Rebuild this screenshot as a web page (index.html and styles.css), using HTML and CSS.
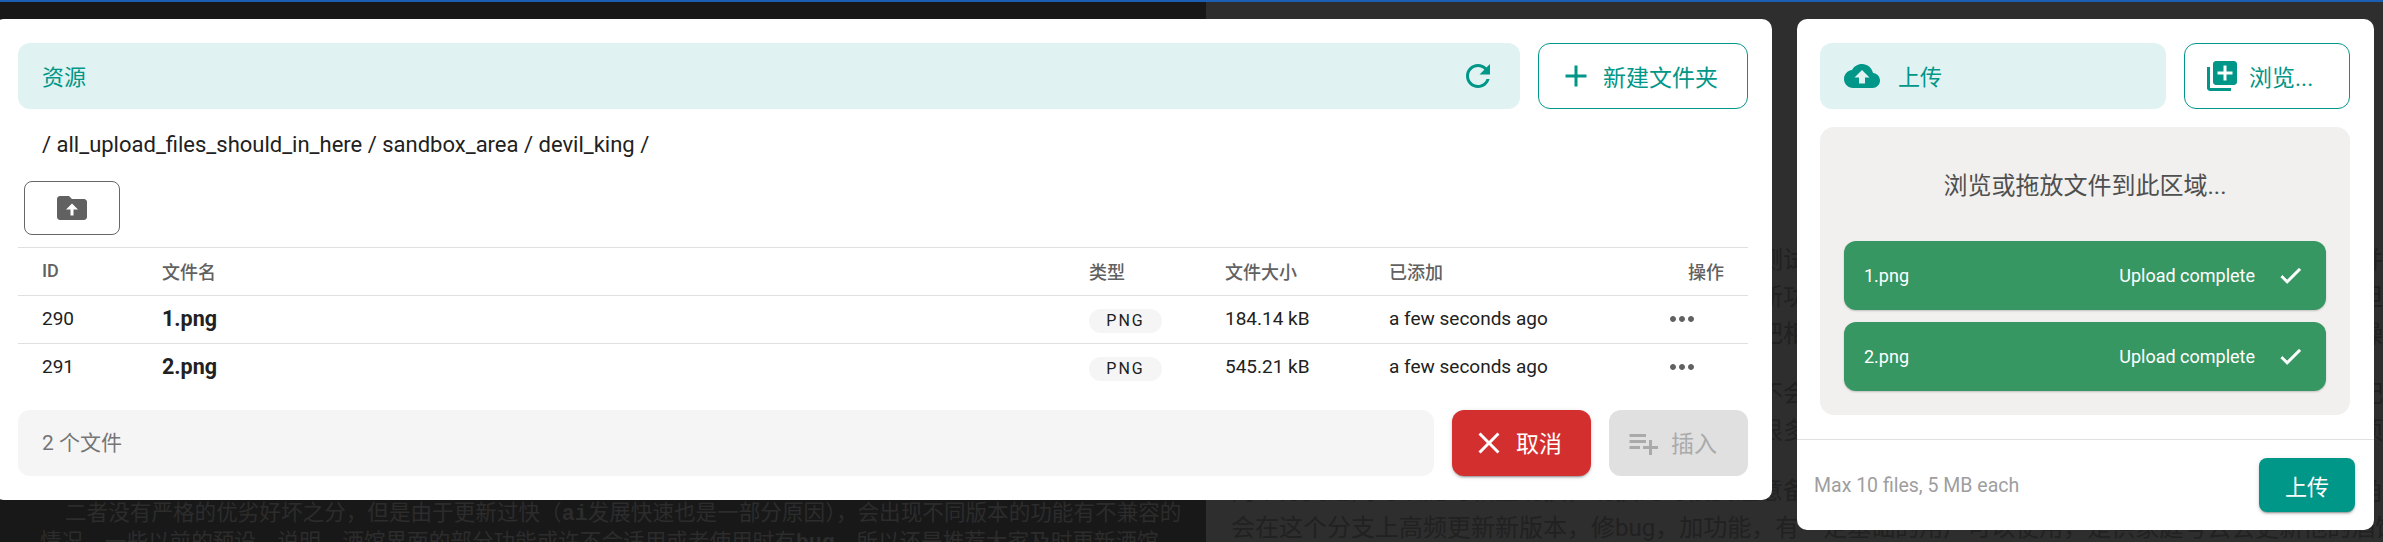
FILE: index.html
```html
<!DOCTYPE html>
<html lang="zh-CN">
<head>
    <meta charset="UTF-8">
    <title>资源</title>
    <link rel="stylesheet" href="styles.css">
</head>
<body>
    <div class="page">
        <div class="page-left">
            <p>二者没有严格的优劣好坏之分，但是由于更新过快（<b>ai</b>发展快速也是一部分原因），会出现不同版本的功能有不兼容的</p>
            <p class="flush">情况，一些以前的预设、说明、酒馆界面的部分功能或许不会适用或者使用时有<b>bug</b>，所以还是推荐大家及时更新酒馆</p>
        </div>
        <div class="page-right">
            <p>酒馆目前有两个分支，一个是稳定版本，另一个是测试分支，天末更新的内容会先在这里发布，然后才会合并到稳定的版本化<br>
            这里的内容都是可以随时修改的，如果你想要尝试新功能可改动设置，只需要切换分支即可完成更新，不用担心丢失数据文件了<br>
            你也可以选择回到之前的版本，或者在配置文件中把相关功能加或者减，然后重新启动一下酒馆就可以了，操作很简单的方法</p>
            <p>如果你是第一次安装的话建议使用稳定分支，这样不会有一个新手难以解决的问题，并且大部分插件也都适配这个版本的匹<br>
            配置，而测试分支则更适合喜欢尝鲜的朋友使用，很多新功能的入口都在这里，可以提前体验到新版本的各项功能和优化的</p>
            <p>两个分支之间可以随时相互切换，切换的时候要注意备份，但是不用担心，只要数据还在就不会影响已有的角色卡和聊天部<br>
            会在这个分支上高频更新新版本，修bug，加功能，有一定基础的用户可以使用，是供家庭号云会更新他的酒馆。</p>
        </div>
    </div>

    <div class="dialogs">
        <section class="dialog dialog-files">
            <div class="head">
                <div class="head-bar">
                    <span class="head-title">资源</span>
                    <svg class="icon refresh" viewBox="0 0 24 24"><path d="M17.65 6.35C16.2 4.9 14.21 4 12 4c-4.42 0-7.99 3.58-7.99 8s3.57 8 7.99 8c3.73 0 6.84-2.55 7.73-6h-2.08c-.82 2.33-3.04 4-5.65 4-3.31 0-6-2.69-6-6s2.69-6 6-6c1.66 0 3.14.69 4.22 1.78L13 11h7V4l-2.35 2.35z"/></svg>
                </div>
                <button class="btn-outline btn-folder">
                    <svg class="icon" viewBox="0 0 24 24"><path d="M19 13h-6v6h-2v-6H5v-2h6V5h2v6h6v2z"/></svg>
                    <span>新建文件夹</span>
                </button>
            </div>

            <div class="crumbs">/ all_upload_files_should_in_here / sandbox_area / devil_king /</div>

            <button class="btn-back">
                <svg class="icon" viewBox="0 0 24 24"><path d="M20 6h-8l-2-2H4c-1.1 0-2 .9-2 2v12c0 1.1.9 2 2 2h16c1.1 0 2-.9 2-2V8c0-1.1-.9-2-2-2z"/><path class="arrow" d="M13 17v-4h3l-4-4-4 4h3v4z"/></svg>
            </button>

            <table class="files">
                <colgroup>
                    <col class="col-id"><col class="col-name"><col class="col-type"><col class="col-size"><col class="col-added"><col>
                </colgroup>
                <thead>
                    <tr><th>ID</th><th>文件名</th><th>类型</th><th>文件大小</th><th>已添加</th><th class="right">操作</th></tr>
                </thead>
                <tbody>
                    <tr>
                        <td>290</td>
                        <td class="name">1.png</td>
                        <td><span class="chip">PNG</span></td>
                        <td>184.14 kB</td>
                        <td>a few seconds ago</td>
                        <td class="right"><svg class="icon dots" viewBox="0 0 24 24"><path d="M6 10c-1.1 0-2 .9-2 2s.9 2 2 2 2-.9 2-2-.9-2-2-2zm12 0c-1.1 0-2 .9-2 2s.9 2 2 2 2-.9 2-2-.9-2-2-2zm-6 0c-1.1 0-2 .9-2 2s.9 2 2 2 2-.9 2-2-.9-2-2-2z"/></svg></td>
                    </tr>
                    <tr>
                        <td>291</td>
                        <td class="name">2.png</td>
                        <td><span class="chip">PNG</span></td>
                        <td>545.21 kB</td>
                        <td>a few seconds ago</td>
                        <td class="right"><svg class="icon dots" viewBox="0 0 24 24"><path d="M6 10c-1.1 0-2 .9-2 2s.9 2 2 2 2-.9 2-2-.9-2-2-2zm12 0c-1.1 0-2 .9-2 2s.9 2 2 2 2-.9 2-2-.9-2-2-2zm-6 0c-1.1 0-2 .9-2 2s.9 2 2 2 2-.9 2-2-.9-2-2-2z"/></svg></td>
                    </tr>
                </tbody>
            </table>

            <div class="foot">
                <div class="foot-status">2 个文件</div>
                <button class="btn-cancel">
                    <svg class="icon" viewBox="0 0 24 24"><path d="M19 6.41 17.59 5 12 10.59 6.41 5 5 6.41 10.59 12 5 17.59 6.41 19 12 13.41 17.59 19 19 17.59 13.41 12z"/></svg>
                    <span>取消</span>
                </button>
                <button class="btn-insert" disabled>
                    <svg class="icon" viewBox="0 0 24 24"><path d="M14 10H3v2h11v-2zm0-4H3v2h11V6zm4 8v-4h-2v4h-4v2h4v4h2v-4h4v-2h-4zM3 16h7v-2H3v2z"/></svg>
                    <span>插入</span>
                </button>
            </div>
        </section>

        <section class="dialog dialog-upload">
            <div class="head">
                <div class="head-bar upload-bar">
                    <svg class="icon" viewBox="0 0 24 24"><path d="M19.35 10.04C18.67 6.59 15.64 4 12 4 9.11 4 6.6 5.64 5.35 8.04 2.34 8.36 0 10.91 0 14c0 3.31 2.69 6 6 6h13c2.76 0 5-2.24 5-5 0-2.64-2.05-4.78-4.65-4.96zM14 13v4h-4v-4H7l5-5 5 5h-3z"/></svg>
                    <span class="head-title">上传</span>
                </div>
                <button class="btn-outline btn-browse">
                    <svg class="icon" viewBox="0 0 24 24"><path d="M4 6H2v14c0 1.1.9 2 2 2h14v-2H4V6zm16-4H8c-1.1 0-2 .9-2 2v12c0 1.1.9 2 2 2h12c1.1 0 2-.9 2-2V4c0-1.1-.9-2-2-2zm-1 9h-4v4h-2v-4H9V9h4V5h2v4h4v2z"/></svg>
                    <span>浏览...</span>
                </button>
            </div>

            <div class="drop">
                <div class="drop-label">浏览或拖放文件到此区域...</div>
                <div class="drop-item">
                    <span class="drop-name">1.png</span>
                    <span class="drop-state">Upload complete</span>
                    <svg class="check" viewBox="0 0 24 24"><path d="M9 16.17 4.83 12l-1.42 1.41L9 19 21 7l-1.41-1.41z"/></svg>
                </div>
                <div class="drop-item">
                    <span class="drop-name">2.png</span>
                    <span class="drop-state">Upload complete</span>
                    <svg class="check" viewBox="0 0 24 24"><path d="M9 16.17 4.83 12l-1.42 1.41L9 19 21 7l-1.41-1.41z"/></svg>
                </div>
            </div>

            <div class="upload-foot">
                <span class="limit">Max 10 files, 5 MB each</span>
                <button class="btn-upload">上传</button>
            </div>
        </section>
    </div>
</body>
</html>
```

FILE: styles.css
```css
* {
    box-sizing: border-box;
}
html, body {
    margin: 0;
    height: 542px;
    overflow: hidden;
}
body {
    position: relative;
    font-family: Roboto, "Noto Sans CJK SC", sans-serif;
    background-color: #181818;
}
button {
    font-family: inherit;
}
.icon {
    width: 36px;
    height: 36px;
    flex: none;
    fill: currentColor;
    display: block;
}

/* page behind the dialogs */
.page {
    display: flex;
    height: 542px;
    border-top: 2px solid #1a5fb4;
}
.page p {
    margin: 0;
    white-space: nowrap;
}
.page b {
    font-family: "Liberation Mono", monospace;
}
.page-left {
    width: 1206px;
    flex: none;
    padding: 497px 0 0 65px;
    color: #2c2c2c;
    font-size: 21.6px;
    line-height: 28px;
    overflow: hidden;
}
.page-left .flush {
    margin-left: -25px;
}
.page-right {
    flex: 1;
    min-width: 0;
    padding: 240px 0 0 25px;
    background-color: #2e2e2e;
    color: #212121;
    font-size: 24px;
    line-height: 37px;
    overflow: hidden;
}
.page-right p + p {
    margin-top: 23px;
}

/* dialogs */
.dialogs {
    position: absolute;
    top: 19px;
    left: -6px;
    display: flex;
    align-items: flex-start;
    gap: 25px;
}
.dialog {
    background-color: #fff;
    border-radius: 10px;
    padding: 24px;
}
.dialog-files {
    display: flex;
    flex-direction: column;
    width: 1778px;
    height: 481px;
}
.dialog-upload {
    width: 577px;
    height: 511px;
    padding: 24px 0 0;
}
.head {
    display: flex;
    gap: 18px;
    height: 66px;
    flex: none;
}
.head-bar {
    flex: 1;
    display: flex;
    align-items: center;
    justify-content: space-between;
    padding: 0 24px;
    border-radius: 12px;
    background-color: #e0f2f1;
    color: #009688;
}
.head-title {
    font-size: 22px;
    margin-top: -3px;
}
.btn-outline {
    display: flex;
    align-items: center;
    gap: 9px;
    height: 66px;
    padding: 0 0 0 19px;
    border: 1px solid #009688;
    border-radius: 12px;
    background: #fff;
    color: #009688;
    font-size: 23px;
}
.btn-folder {
    width: 210px;
}
.crumbs {
    margin: 20px 0 0;
    padding-left: 24px;
    height: 32px;
    font-size: 22px;
    line-height: 32px;
    color: #212121;
}
.btn-back {
    display: flex;
    align-items: center;
    justify-content: center;
    width: 96px;
    height: 54px;
    margin: 20px 0 12px 6px;
    padding: 0;
    border: 1px solid #666;
    border-radius: 8px;
    background: #fff;
    color: #616161;
}
.btn-back .arrow {
    fill: #fff;
}

/* file table */
.files {
    width: 1730px;
    table-layout: fixed;
    border-collapse: collapse;
}
.col-id { width: 120px; }
.col-name { width: 927px; }
.col-type { width: 136px; }
.col-size { width: 164px; }
.col-added { width: 240px; }
.files th, .files td {
    height: 48px;
    padding: 0 24px 2px;
    text-align: left;
    font-size: 19px;
    color: #212121;
    border-top: 1px solid #e0e0e0;
}
.files th {
    font-size: 18px;
    font-weight: 500;
    color: #616161;
}
.files .right {
    text-align: right;
}
.files .name {
    font-size: 21.5px;
    font-weight: 700;
}
.chip {
    display: inline-block;
    width: 73px;
    height: 24px;
    margin-top: 5px;
    border-radius: 12px;
    background-color: #f5f5f5;
    text-align: center;
    font-size: 16px;
    line-height: 24px;
    letter-spacing: 2px;
    vertical-align: middle;
}
.dots {
    display: inline-block;
    vertical-align: middle;
    margin-right: 24px;
    color: #616161;
}

/* footer of the file dialog */
.foot {
    display: flex;
    gap: 18px;
    height: 66px;
    flex: none;
    margin-top: auto;
}
.foot-status {
    flex: 1;
    display: flex;
    align-items: center;
    padding: 0 0 4px 24px;
    border-radius: 12px;
    background-color: #f5f5f5;
    color: #757575;
    font-size: 21px;
}
.btn-cancel, .btn-insert {
    display: flex;
    align-items: center;
    width: 139px;
    border: none;
    border-radius: 12px;
    font-size: 23px;
}
.btn-cancel span, .btn-insert span {
    margin-top: -3px;
}
.btn-cancel {
    gap: 9px;
    padding: 0 0 0 19px;
    background-color: #d32f2f;
    color: #fff;
    box-shadow: 0 3px 1px -2px rgba(0,0,0,.2), 0 2px 2px rgba(0,0,0,.14), 0 1px 5px rgba(0,0,0,.12);
}
.btn-insert {
    gap: 10px;
    padding: 0 0 0 16px;
    background-color: #e0e0e0;
    color: #aaa;
}

/* upload dialog */
.dialog-upload .head {
    padding: 0 24px 0 23px;
}
.upload-bar {
    justify-content: flex-start;
    gap: 18px;
}
.btn-browse {
    width: 166px;
}
.drop {
    display: flex;
    flex-direction: column;
    gap: 12px;
    margin: 18px 24px 0 23px;
    padding: 24px;
    height: 288px;
    border-radius: 14px;
    background-color: #f1f0ef;
}
.drop-label {
    height: 78px;
    text-align: center;
    font-size: 24px;
    line-height: 70px;
    color: #4f4f4f;
}
.drop-item {
    display: flex;
    align-items: center;
    flex: none;
    height: 69px;
    padding: 0 22px 0 20px;
    border-radius: 12px;
    background-color: #369763;
    color: #fff;
    font-size: 18px;
    box-shadow: 0 1px 2px rgba(0,0,0,.2);
}
.drop-state {
    margin-left: auto;
    margin-right: 22px;
}
.check {
    width: 27px;
    height: 27px;
    fill: #fff;
    stroke: #fff;
    stroke-width: .8;
}
.upload-foot {
    display: flex;
    align-items: center;
    justify-content: space-between;
    margin-top: 24px;
    height: 91px;
    padding: 0 19px 0 17px;
    border-top: 1px solid #e0e0e0;
}
.limit {
    font-size: 19.5px;
    color: #9e9e9e;
}
.btn-upload {
    width: 96px;
    height: 54px;
    padding: 0;
    border: none;
    border-radius: 8px;
    background-color: #009688;
    color: #fff;
    font-size: 22px;
    box-shadow: 0 3px 1px -2px rgba(0,0,0,.2), 0 2px 2px rgba(0,0,0,.14), 0 1px 5px rgba(0,0,0,.12);
}
```
